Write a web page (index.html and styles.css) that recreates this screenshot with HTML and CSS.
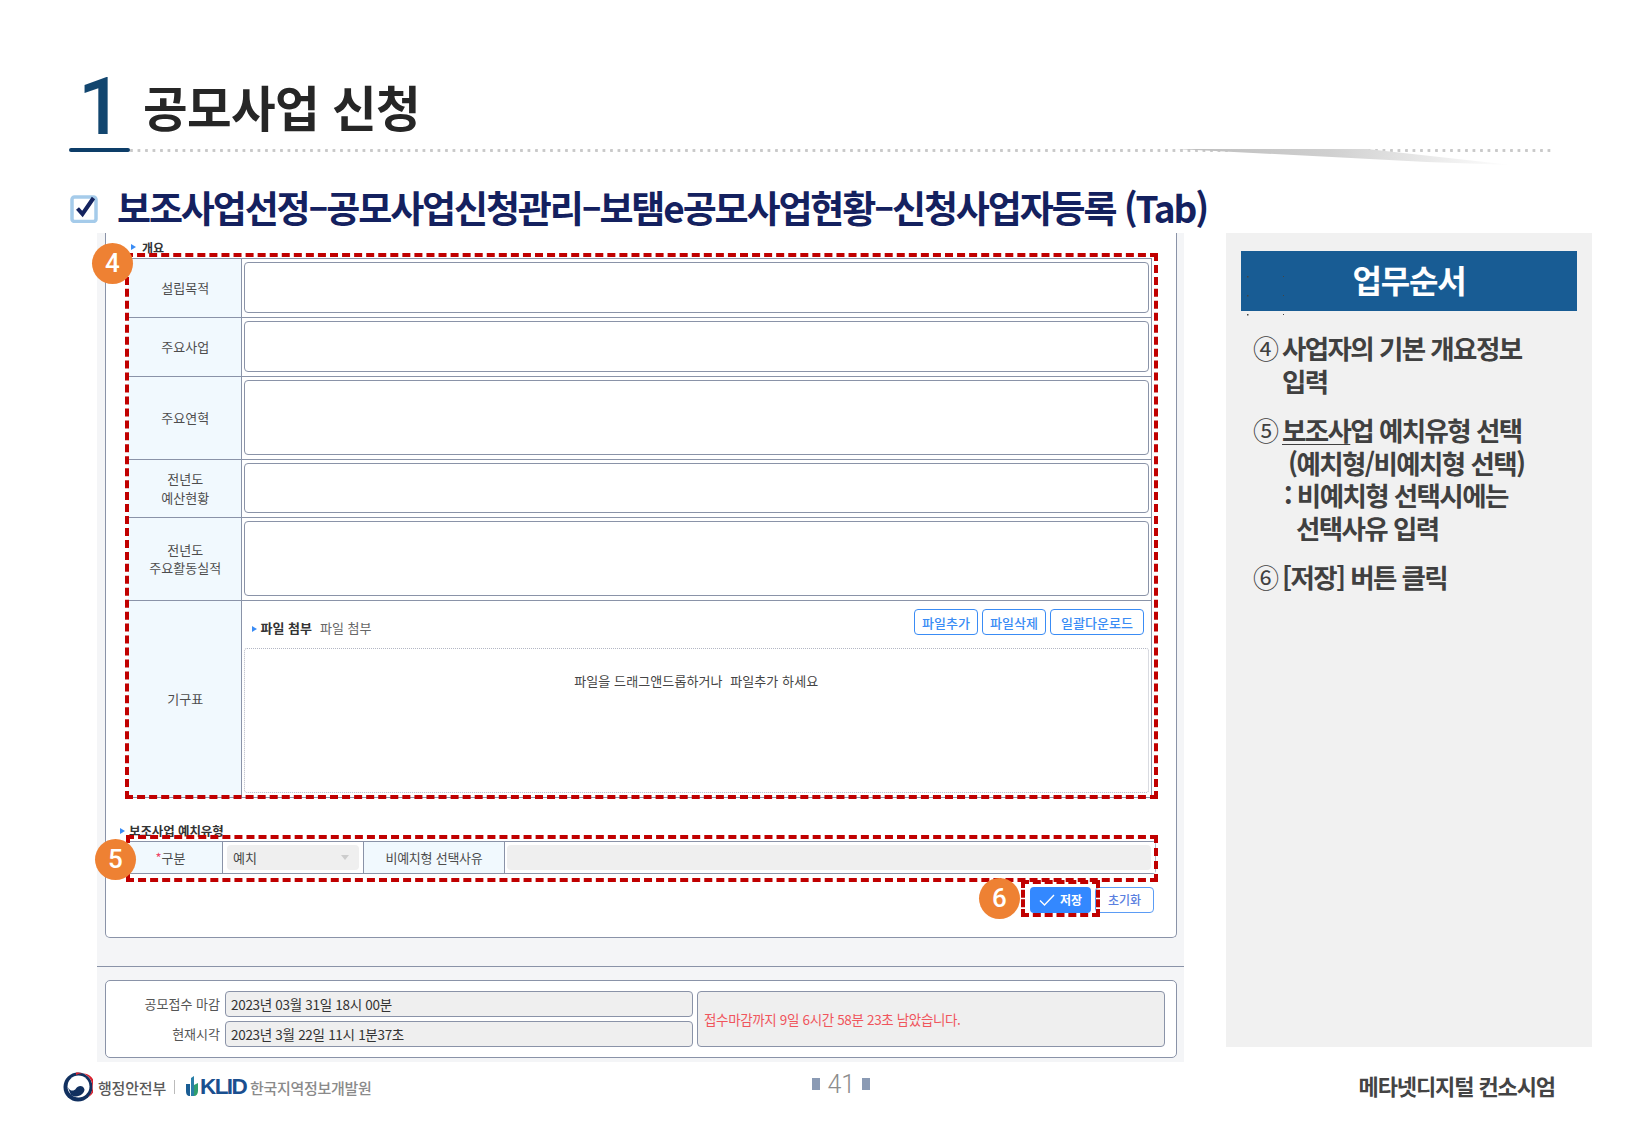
FILE: index.html
```html
<!DOCTYPE html>
<html lang="ko">
<head>
<meta charset="utf-8">
<title>공모사업 신청</title>
<link rel="stylesheet" href="styles.css">
</head>
<body>
<div class="page">
  <header class="title-row">
    <span class="title-num">1</span>
    <h1 class="title-text">공모사업 신청</h1>
  </header>
  <div class="rule">
    <span class="rule-bar"></span>
    <span class="rule-dots"></span>
    <svg class="swoosh" width="340" height="18" viewBox="0 0 340 18">
      <defs><linearGradient id="sw" x1="0" x2="1" y1="0" y2="0"><stop offset="0" stop-color="#bdbdbd"/><stop offset="0.45" stop-color="#cfcfcf"/><stop offset="1" stop-color="#ffffff"/></linearGradient></defs>
      <polygon points="0,0 190,0 335,16 250,13" fill="url(#sw)"/>
    </svg>
  </div>
  <h2 class="heading">
    <svg class="check-icon" width="28" height="30" viewBox="0 0 28 30">
      <rect x="2" y="4" width="24" height="24.5" rx="2.5" fill="#fff" stroke="#a5cbea" stroke-width="3.5"/>
      <path d="M7.5 15.5 L12.5 21 L23.5 5" fill="none" stroke="#14235f" stroke-width="4"/>
    </svg>
    <span>보조사업선정–공모사업신청관리–보탬e공모사업현황–신청사업자등록 (Tab)</span>
  </h2>

  <main class="content">
    <section class="panel">
      <div class="inner">
        <div class="sec-label"><i class="tri"></i>개요</div>
        <table class="form">
          <tr class="h59"><th>설립목적</th><td><div class="box"></div></td></tr>
          <tr class="h59"><th>주요사업</th><td><div class="box"></div></td></tr>
          <tr class="h83"><th>주요연혁</th><td><div class="box"></div></td></tr>
          <tr class="h58"><th>전년도<br>예산현황</th><td><div class="box"></div></td></tr>
          <tr class="h83"><th>전년도<br>주요활동실적</th><td><div class="box"></div></td></tr>
          <tr class="h196"><th>기구표</th>
            <td class="file-cell">
              <div class="file-head">
                <div class="file-title"><i class="tri"></i><b>파일 첨부</b><span>파일 첨부</span></div>
                <div class="file-btns">
                  <button class="btn w64">파일추가</button>
                  <button class="btn w64">파일삭제</button>
                  <button class="btn w94">일괄다운로드</button>
                </div>
              </div>
              <div class="drop">파일을 드래그앤드롭하거나&nbsp; 파일추가 하세요</div>
            </td>
          </tr>
        </table>

        <div class="sec-label sec2"><i class="tri"></i>보조사업 예치유형</div>
        <div class="type-row">
          <div class="type-th first"><em>*</em>구분</div>
          <div class="type-td sel-td"><div class="select">예치<i class="caret"></i></div></div>
          <div class="type-th mid">비예치형 선택사유</div>
          <div class="type-td grow"><div class="input-off"></div></div>
        </div>
        <div class="actions">
          <button class="save"><svg width="16" height="12" viewBox="0 0 16 12"><path d="M1 6.5 L5.5 11 L15 1" fill="none" stroke="#fff" stroke-width="1.4"/></svg>저장</button>
          <button class="reset">초기화</button>
        </div>
      </div>
      <div class="divider"></div>
      <div class="timer">
        <div class="timer-left">
          <div class="timer-row"><label>공모접수 마감</label><div class="tfield">2023년 03월 31일 18시 00분</div></div>
          <div class="timer-row"><label>현재시각</label><div class="tfield">2023년 3월 22일 11시 1분37초</div></div>
        </div>
        <div class="remain">접수마감까지 9일 6시간 58분 23초 남았습니다.</div>
      </div>

      <div class="dash d1"></div>
      <div class="dash d2"></div>
      <div class="dash d3"></div>
      <span class="badge b4">4</span>
      <span class="badge b5">5</span>
      <span class="badge b6">6</span>
    </section>

    <aside class="side">
      <div class="side-head">업무순서</div>
      <svg class="specks" width="40" height="42" viewBox="0 0 40 42"><g fill="#444"><rect x="0" y="0" width="1.5" height="1.5"/><rect x="36" y="0" width="1" height="1"/><rect x="0" y="19" width="1.5" height="1.5"/><rect x="36" y="19" width="1" height="1"/><rect x="0" y="38" width="1.5" height="1.5"/><rect x="36" y="38" width="1" height="1"/></g></svg>
      <ol class="steps">
        <li><span class="n">④</span><div><p>사업자의 기본 개요정보</p><p>입력</p></div></li>
        <li><span class="n">⑤</span><div><p><u>보조사</u>업 예치유형 선택</p><p class="i1">(예치형/비예치형 선택)</p><p class="i0">: 비예치형 선택시에는</p><p class="i2">선택사유 입력</p></div></li>
        <li><span class="n">⑥</span><div><p>[저장] 버튼 클릭</p></div></li>
      </ol>
    </aside>
  </main>

  <footer class="footer">
    <div class="org">
      <svg class="emblem" width="30" height="30" viewBox="0 0 30 30">
        <circle cx="15" cy="15" r="14.5" fill="#11305f"/>
        <circle cx="15.5" cy="14.5" r="11" fill="#fff"/>
        <path d="M13 .6 A14.5 14.5 0 0 1 25.5 25 A12.6 12.6 0 0 0 13 3 Z" fill="#d8222f"/>
        <path d="M4.6 15 C7 19.5 11 19.5 13 16.5 C15 13 20.5 13 21.5 17.5 C21.5 22 14 27 8 23 Z" fill="#11305f"/>
      </svg>
      <span class="org-name">행정안전부</span>
      <i class="org-sep"></i>
      <svg class="klid-mark" width="14" height="22" viewBox="0 0 14 22">
        <path d="M1 8 L5 8 L5 20 C2 20 1 18 1 15 Z" fill="#1a5d94"/>
        <path d="M6 2 L9 0 L9 20 L6 20 Z" fill="#2a7fa8"/>
        <path d="M9 9 L13 7 L13 15 C13 18 11 20 9 20 Z" fill="#2f9e6e"/>
      </svg>
      <span class="klid">KLID</span>
      <span class="klid-name">한국지역정보개발원</span>
    </div>
    <div class="pager"><i></i><span>41</span><i></i></div>
    <div class="brand">메타넷디지털 컨소시엄</div>
  </footer>
</div>
</body>
</html>
```
FILE: styles.css
```css
* { box-sizing: border-box; }
html, body { margin: 0; padding: 0; background: #fff; }
body { font-family: "Noto Sans CJK KR", "Noto Sans", sans-serif; color: #333; }
.page { width: 1626px; height: 1125px; overflow: hidden; display: flex; flex-direction: column; }

.title-row { height: 148px; padding: 67px 0 0 78px; display: flex; align-items: flex-start; }
.title-num { font-family: Roboto, "Liberation Sans", sans-serif; font-weight: 500; font-size: 79px; line-height: 80px; color: #12466f; width: 65px; }
.title-text { margin: 4px 0 0; font-size: 48.5px; line-height: 70px; font-weight: 700; color: #262626; letter-spacing: -.6px; }

.rule { position: relative; height: 4px; margin-left: 69px; width: 1484px; display: flex; align-items: center; }
.rule-bar { width: 61px; height: 4px; background: #0d3d68; border-radius: 2px; flex: none; }
.rule-dots { flex: 1; height: 3px; background: radial-gradient(circle at 1.5px 1.5px, #c9c9c9 1.4px, transparent 1.6px) 0 0 / 7.5px 3px repeat-x; }
.swoosh { position: absolute; left: 1108px; top: 1px; }

.heading { margin: 0; height: 81px; padding: 30px 0 0 70px; display: flex; align-items: flex-start; gap: 19px; font-size: 37px; line-height: 50px; font-weight: 700; color: #14215f; letter-spacing: -2.12px; white-space: nowrap; }
.check-icon { flex: none; margin-top: 11px; }

.content { display: flex; margin-left: 97px; height: 829px; align-items: flex-start; }

.panel { position: relative; width: 1087px; height: 829px; background: #f4f5f7; padding: 0 7px 0 8px; flex: none; }
.inner { width: 1072px; height: 705px; background: #fff; border: 1px solid #8a93a8; border-top: 0; border-radius: 0 0 5px 5px; padding: 0 24px 0 22px; }
.sec-label { height: 25px; font-size: 12px; line-height: 29px; font-weight: 700; color: #333; display: flex; align-items: flex-start; }
.sec2 { height: 19px; margin-top: 24px; margin-left: -8px; font-size: 12.5px; line-height: 18px; letter-spacing: -.1px; }
.tri { display: block; width: 0; height: 0; border-left: 5px solid #3a8cf5; border-top: 3px solid transparent; border-bottom: 3px solid transparent; margin: 11px 6px 0 3px; flex: none; }
.sec2 .tri { margin: 6px 4px 0 0; }

.form { width: 1024px; border-collapse: collapse; table-layout: fixed; border-top: 1px solid #8a93a8; border-bottom: 1px solid #8a93a8; }
.form th { width: 113px; background: #f1f9fe; font-size: 13px; line-height: 18.5px; font-weight: 400; color: #4d4d4d; border-bottom: 1px solid #8a93a8; border-right: 1px solid #8a93a8; padding: 0 0 0 2px; }
.form td { padding: 3px 2px 4px; border-bottom: 1px solid #8a93a8; border-right: 1px solid #8a93a8; }
.form tr:last-child th, .form tr:last-child td { border-bottom: 0; }
.h59 { height: 59px; } .h83 { height: 83px; } .h58 { height: 58px; } .h196 { height: 196px; }
.h59 .box { height: 51px; } .h83 .box { height: 75px; } .h58 .box { height: 50px; }
.box { border: 1.5px solid #8a93a8; border-radius: 4px; background: #fff; }
.form td.file-cell { padding: 9px 2px 4px; vertical-align: top; }
.file-head { height: 38px; display: flex; justify-content: space-between; padding: 0 5px 0 8px; }
.file-title { display: flex; font-size: 13px; line-height: 36px; color: #666; }
.file-title .tri { margin: 16px 4px 0 0; }
.file-title b { color: #333; margin-right: 8px; }
.file-btns { display: flex; gap: 4px; height: 26px; margin-top: -1px; }
.btn { height: 26px; border: 1px solid #3a8cf5; border-radius: 4px; background: #fff; color: #3a8cf5; font: 500 13px/1 "Noto Sans CJK KR", sans-serif; padding: 0; }
.w64 { width: 64px; } .w94 { width: 94px; }
.drop { height: 145px; border: 1px dotted #b3b7c4; border-radius: 3px; text-align: center; font-size: 13px; line-height: 20px; padding-top: 22px; color: #444; letter-spacing: .1px; }

.type-row { display: flex; height: 33px; width: 1028px; border: 1px solid #b4b8c6; border-left: 0; border-radius: 0 4px 4px 0; border-top-color: #8a93a8; border-bottom-color: #8a93a8; }
.type-th { background: #f1f9fe; font-size: 13px; line-height: 31px; text-align: center; color: #4d4d4d; border-right: 1px solid #8a93a8; flex: none; }
.first { width: 95px; padding-right: 9px; }
.first em { color: #ee4466; font-style: normal; }
.mid { width: 141px; letter-spacing: -.25px; }
.type-td { padding: 3px 4px; background: #fff; }
.sel-td { width: 141px; flex: none; border-right: 1px solid #8a93a8; }
.grow { flex: 1; padding: 3px 4px 3px 2px; }
.select { height: 25px; background: #efefef; border-radius: 4px; font-size: 13px; line-height: 25px; padding-left: 6px; color: #444; position: relative; }
.caret { position: absolute; right: 10px; top: 10px; width: 0; height: 0; border-left: 4px solid transparent; border-right: 4px solid transparent; border-top: 5px solid #ccc; }
.input-off { height: 25px; background: #efefef; border-radius: 4px; }

.actions { display: flex; justify-content: flex-end; gap: 4px; margin: 13px -2px 0 0; }
.save { width: 61px; height: 26px; background: #3388ff; border: 0; border-radius: 4px; color: #fff; font: 700 12px/1 "Noto Sans CJK KR", sans-serif; display: flex; align-items: center; justify-content: center; gap: 5px; padding: 0; }
.reset { width: 59px; height: 26px; background: #fff; border: 1px solid #5b9cf5; border-radius: 4px; color: #5a7fe0; font: 500 12px/1 "Noto Sans CJK KR", sans-serif; padding: 0; }

.divider { height: 1px; background: #8a93a8; margin: 28px -7px 0 -8px; }
.timer { margin-top: 13px; width: 1072px; height: 78px; background: #fff; border: 1px solid #8a93a8; border-radius: 5px; padding: 10px 11px 10px 0; display: flex; gap: 4px; }
.timer-left { width: 587px; display: flex; flex-direction: column; gap: 4px; flex: none; }
.timer-row { display: flex; height: 26px; align-items: stretch; }
.timer-row label { width: 114px; margin-right: 5px; flex: none; text-align: right; font-size: 13px; line-height: 26px; color: #555; }
.tfield { flex: 1; background: #efefef; border: 1px solid #8a93a8; border-radius: 4px; font-size: 13.5px; line-height: 25px; padding-left: 5px; color: #333; letter-spacing: -.3px; }
.remain { flex: 1; background: #efefef; border: 1px solid #8a93a8; border-radius: 4px; font-size: 13.5px; line-height: 54px; padding-left: 6px; color: #f0555c; letter-spacing: -.35px; }

.dash { position: absolute; border: 4px dashed #c00000; pointer-events: none; }
.d1 { left: 28px; top: 20px; width: 1033px; height: 546px; }
.d2 { left: 29px; top: 602px; width: 1032px; height: 47px; }
.d3 { left: 924px; top: 647px; width: 79px; height: 37px; }
.badge { position: absolute; width: 41px; height: 41px; border-radius: 50%; background: #ee8133; color: #fff; font: 500 26px/41px Roboto, sans-serif; text-align: center; }
.b4 { left: -5px; top: 10px; }
.b5 { left: -2px; top: 606px; }
.b6 { left: 882px; top: 645px; }

.side { position: relative; margin-left: 42px; width: 366px; height: 814px; background: #f1f1f1; padding: 18px 15px 0; flex: none; }
.side-head { height: 60px; background: #185c94; color: #fff; font-size: 32px; line-height: 57px; font-weight: 700; text-align: center; letter-spacing: -1.2px; }
.specks { position: absolute; left: 21px; top: 43px; }
.steps { list-style: none; margin: 0; padding: 21px 0 0 12px; color: #404040; font-size: 26.5px; line-height: 32.5px; font-weight: 700; letter-spacing: -1.6px; }
.steps li { display: flex; margin-bottom: 17px; }
.steps p { margin: 0; white-space: nowrap; }
.n { width: 29px; flex: none; font-weight: 400; letter-spacing: 0; font-size: 26px; }
.steps u { text-decoration-thickness: 1px; text-underline-offset: 3px; }
.i1 { padding-left: 6px; } .i0 { padding-left: 2px; } .i2 { padding-left: 14px; }

.footer { display: flex; align-items: flex-start; padding: 10px 71px 0 63px; position: relative; justify-content: space-between; }
.org { display: flex; align-items: center; height: 30px; width: 450px; flex: none; }
.emblem { flex: none; margin-right: 5px; }
.org-name { font-size: 15px; font-weight: 500; color: #5a5a5a; letter-spacing: -.2px; }
.org-sep { width: 1px; height: 14px; background: #bbb; margin: 0 10px 0 8px; }
.klid-mark { flex: none; margin-right: 1px; }
.klid { font: 700 22.5px/1 "Liberation Sans", sans-serif; color: #1a4f8f; letter-spacing: -1.6px; margin-right: 4px; }
.klid-name { font-size: 15px; font-weight: 500; color: #8a8a8a; letter-spacing: -.3px; }
.pager { display: flex; align-items: center; gap: 7px; height: 26px; margin-left: -189px; color: #8c8c8c; }
.pager i { width: 8px; height: 12px; background: #8a9ab4; display: block; margin-top: -2px; }
.pager span { font: 300 25px/26px Roboto, sans-serif; }
.brand { font-size: 22px; line-height: 34px; font-weight: 700; color: #444; letter-spacing: -1.1px; margin-top: -4px; }
```
